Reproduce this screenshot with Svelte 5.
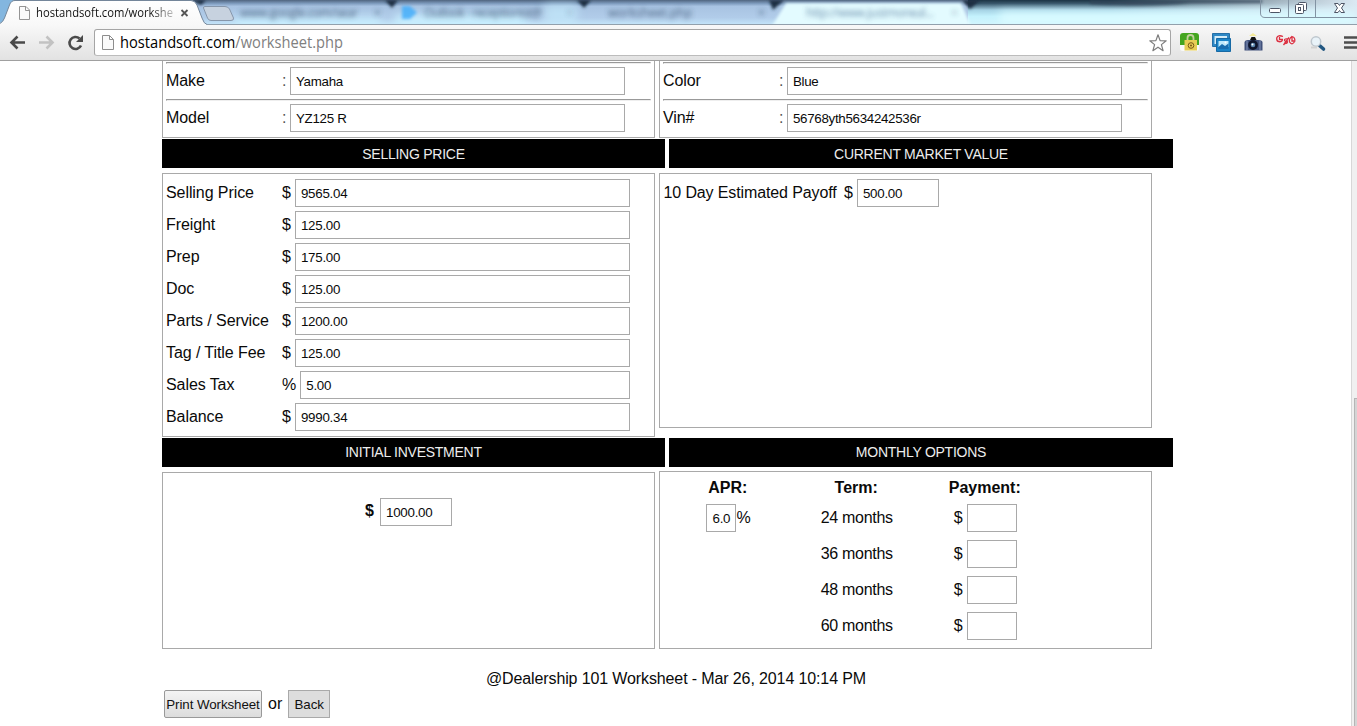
<script>
  const vehicle = [
    [['Make', 'Yamaha'], ['Model', 'YZ125 R']],
    [['Color', 'Blue'], ['Vin#', '56768yth5634242536r']]
  ];
  const prices = [
    ['Selling Price', '$', '9565.04'],
    ['Freight', '$', '125.00'],
    ['Prep', '$', '175.00'],
    ['Doc', '$', '125.00'],
    ['Parts / Service', '$', '1200.00'],
    ['Tag / Title Fee', '$', '125.00'],
    ['Sales Tax', '%', '5.00'],
    ['Balance', '$', '9990.34']
  ];
  const terms = [24, 36, 48, 60];
</script>

<div class="window">
  <header class="chrome">
    <svg class="tabs" width="1357" height="25" viewBox="0 0 1357 25">
      <defs>
        <linearGradient id="glass" x1="0" y1="0" x2="0" y2="1">
          <stop offset="0" stop-color="#50657f" />
          <stop offset=".14" stop-color="#7e9bbd" />
          <stop offset=".25" stop-color="#a8c3e2" />
          <stop offset=".7" stop-color="#b1cce9" />
          <stop offset="1" stop-color="#c5e6fa" />
        </linearGradient>
        <linearGradient id="bright" x1="0" y1="0" x2="0" y2="1">
          <stop offset="0" stop-color="#1c3444" />
          <stop offset=".14" stop-color="#38566a" />
          <stop offset=".4" stop-color="#a5d2e4" />
          <stop offset=".65" stop-color="#c4f2fd" />
          <stop offset="1" stop-color="#d3f5fd" />
        </linearGradient>
        <linearGradient id="corner" x1="0" y1="0" x2="1" y2="0">
          <stop offset="0" stop-color="#e6f4fb" stop-opacity="0" />
          <stop offset="1" stop-color="#dbe9f3" />
        </linearGradient>
        <linearGradient id="tabfill" x1="0" y1="0" x2="0" y2="1">
          <stop offset="0" stop-color="#fff" />
          <stop offset="1" stop-color="#f8f8f8" />
        </linearGradient>
        <linearGradient id="fade" gradientUnits="userSpaceOnUse" x1="150" y1="0" x2="175" y2="0">
          <stop offset="0" stop-color="#111" />
          <stop offset="1" stop-color="#111" stop-opacity=".2" />
        </linearGradient>
        <filter id="soft" x="-20%" y="-60%" width="140%" height="220%"><feGaussianBlur stdDeviation="2.4" /></filter>
        <filter id="mild" x="-20%" y="-60%" width="140%" height="220%"><feGaussianBlur stdDeviation="1.6" /></filter>
        <filter id="wide" x="-20%" y="-60%" width="140%" height="220%"><feGaussianBlur stdDeviation="5" /></filter>
      </defs>
      <rect width="1357" height="25" fill="url(#glass)" />
      <rect x="968" width="389" height="25" fill="url(#bright)" />
      <rect x="1110" width="247" height="25" fill="url(#corner)" />
      <path d="M1090 0H1262V3H1190Q1150 8 1090 4Z" fill="#2d4357" opacity=".8" filter="url(#mild)" />
      <g filter="url(#wide)" fill="#c8f0ff">
        <rect x="235" y="18" width="145" height="9" />
        <rect x="395" y="15" width="130" height="12" />
        <rect x="545" y="4" width="32" height="20" opacity=".6" />
        <rect x="1000" y="12" width="357" height="14" fill="#d9faff" />
      </g>
      <path d="M0 0H14L2 25H0Z" fill="#83b6df" />
      <g filter="url(#mild)">
        <path d="M772 26L786 3H961L971 26Z" fill="#e3fbff" />
        <path d="M385 0H398L392 8ZM577 0H591L584 8ZM769 0H784L773 10ZM962 0H980L970 9ZM192 0H206L201 5Z" fill="#1d2e43" />
      </g>
      <path d="M402 6H410L417 12.500L410 19H402Z" fill="#45aefa" filter="url(#mild)" opacity=".85" />
      <g class="ghost" filter="url(#soft)">
        <text x="240" y="17" textLength="118">www.google.com/sear</text>
        <text x="424" y="17" textLength="118">Outlook - receptionist@</text>
        <text x="608" y="17" textLength="84">worksheet.php</text>
        <text x="806" y="17" textLength="128" fill="#4f7397">http://www.justmoneal...</text>
        <text x="374" y="17">×</text><text x="566" y="17" opacity=".5">×</text><text x="758" y="17">×</text><text x="951" y="17" opacity=".6">×</text>
      </g>
      <rect y="24" width="1357" height="1" fill="#92a0ac" />
      <path d="M203.500 8Q203 6.500 205 6.500H225Q228 6.500 229.500 9L233.500 18Q234 20.500 231 20.500H211Q208.500 20.500 207.500 18Z" fill="#c7d2df" stroke="#8696aa" />
      <path d="M0 25V23Q3 22 4.500 18L9.500 5Q11 .5 15 .5H191Q195 .5 197 5L202 18Q204 24 207 24.500V25Z" fill="url(#tabfill)" />
      <path d="M0 23.500Q3 22 4.500 18L9.500 5Q11 .5 15 .5H191Q195 .5 197 5L202 18Q204 24 207 24.500" fill="none" stroke="#74869a" />
      <path d="M19.500 6.500H26L29.500 10V19.500H19.500ZM25.500 6.500V10.500H29.500" fill="#fafafa" stroke="#949494" />
      <text class="tabtitle" x="36" y="17" textLength="137" lengthAdjust="spacingAndGlyphs" fill="url(#fade)">hostandsoft.com/workshe</text>
      <path d="M181.500 10L187.500 16M187.500 10L181.500 16" stroke="#555" stroke-width="1.800" />
      <path d="M1260.500 0V13Q1260.500 17.500 1265 17.500H1357M1288.500 0V17M1315.500 0V17" fill="none" stroke="#8293a3" />
      <g fill="#fff" stroke="#4d5565">
        <rect x="1269.500" y="8.500" width="11" height="4" rx="1" />
        <rect x="1298.500" y="2.500" width="8" height="8" rx="1" />
        <rect x="1295.500" y="4.500" width="8" height="9" rx="1" />
        <rect x="1298.500" y="7.500" width="2" height="3" />
        <path d="M1334.500 3.500H1338L1339.500 5.500L1341 3.500H1344.500L1341.500 8L1344.500 12.500H1341L1339.500 10.500L1338 12.500H1334.500L1337.500 8Z" />
      </g>
    </svg>
    <div class="toolbar">
      <svg class="nav" width="94" height="35" viewBox="0 25 94 35">
        <path d="M25 42.500H12M17.500 36.500L11.500 42.500L17.500 48.500" fill="none" stroke="#4a4a4a" stroke-width="2.600" />
        <path d="M39 42.500H52M46.500 36.500L52.500 42.500L46.500 48.500" fill="none" stroke="#c2c2c2" stroke-width="2.600" />
        <path d="M81 45.500A6 6 0 1 1 79.500 38.500" fill="none" stroke="#4a4a4a" stroke-width="2.600" />
        <path d="M83 35V42H76Z" fill="#4a4a4a" />
      </svg>
      <div class="omnibox">
        <svg width="12" height="16" viewBox="0 0 12 16"><path d="M.5 .5H7.500L11.500 4.500V14.500H.5ZM7.500 .5V4.500H11.500" fill="#fafafa" stroke="#8d8d8d" /></svg>
        <svg class="url" width="240" height="25"><text x="0" y="18" textLength="223" lengthAdjust="spacingAndGlyphs">hostandsoft.com<tspan fill="#808080">/worksheet.php</tspan></text></svg>
        <svg class="star" width="20" height="20" viewBox="0 0 20 20"><path d="M10 1.800L12.100 7.600L18.200 7.800L13.400 11.600L15.100 17.700L10 14.200L4.900 17.700L6.600 11.600L1.800 7.800L7.900 7.600Z" fill="#fff" stroke="#7d7d7d" stroke-width="1.200" stroke-linejoin="round" /></svg>
      </div>
      <svg class="ext" width="187" height="35" viewBox="1170 25 187 35">
        <rect x="1180" y="33" width="19" height="18" rx="3" fill="#fafafa" />
        <path d="M1180 45V36Q1180 33 1183 33H1196Q1199 33 1199 36V45Z" fill="#43a51f" />
        <path d="M1187.500 42V38Q1187.500 35 1190.500 35T1193.500 38V42" fill="none" stroke="#c2cf9c" stroke-width="1.800" />
        <rect x="1184.500" y="40" width="12.500" height="10.500" fill="#e8cd55" />
        <circle cx="1191" cy="45.500" r="2.800" fill="none" stroke="#7b5716" /><circle cx="1191" cy="45.500" r="1" fill="#7b5716" />
        <path d="M1212.500 33.500H1229.500V46.500H1212.500Z" fill="#2e88c5" stroke="#256fa7" />
        <path d="M1214.500 36H1227V44H1214.500Z" fill="#d4ecf8" />
        <path d="M1216.500 38.500H1230.500V51.500H1216.500Z" fill="#1b83c7" stroke="#1769a4" />
        <path d="M1218.500 41H1228.500V47H1218.500Z" fill="#bee8fb" />
        <path d="M1218.500 47L1222 44L1225 46L1228.500 43.500V49H1218.500Z" fill="#176cae" /><circle cx="1225.500" cy="42.500" r="1" fill="#fff" />
        <path d="M1249 36H1257L1253 33Z" fill="#f4ea9a" /><path d="M1250 40L1251.500 37H1255L1256.500 40Z" fill="#111" />
        <path d="M1244.500 42Q1245 40 1248 40H1258Q1262 40 1262.500 42V50.500H1244.500Z" fill="#40517b" />
        <path d="M1247 41V50M1260 41V50" stroke="#7888ae" stroke-width="1.200" />
        <circle cx="1253" cy="45" r="4.900" fill="#0e152c" /><circle cx="1253" cy="45" r="2.300" fill="#5c87af" /><circle cx="1252.500" cy="44.500" r="1" fill="#fff" />
        <g fill="none" stroke="#dc2f40" stroke-width="1.300">
          <path d="M1283 36.500Q1278 34.500 1276.700 38Q1276.500 41.500 1279 41.700Q1282.500 42 1282.300 39.500M1279.500 37V39.500H1283" />
          <path d="M1288 39Q1284.500 38.500 1284.500 40T1287.300 41.500Q1288 43.800 1284 43.500M1289 37.500L1283.500 45" />
          <path d="M1292 36.500Q1288.800 38.500 1289.500 42Q1292 45.800 1294.700 41.500Q1295.500 37.500 1292 36.500V41H1294" />
        </g>
        <path d="M1319.500 45.500L1323.500 49" stroke="#225781" stroke-width="3.600" stroke-linecap="round" />
        <circle cx="1316" cy="41.500" r="4.700" fill="#e9f3f9" stroke="#bec7ce" stroke-width="1.500" />
        <path d="M1311 47.500H1317" stroke="#d2d2d2" stroke-width="2" />
        <path d="M1344 37.500H1357M1344 42.500H1357M1344 47.500H1357" stroke="#4d4d4d" stroke-width="2.600" />
      </svg>
    </div>
  </header>

  <div class="body">
    <main class="page">
      <div class="panels">
        {#each vehicle as side}
          <section class="panel info">
            {#each side as [name, value]}
              <hr />
              <div class="row"><span class="label">{name}</span><span class="colon">:</span><div class="field wide">{value}</div></div>
            {/each}
          </section>
        {/each}
      </div>

      <div class="bars"><h2>SELLING PRICE</h2><h2>CURRENT MARKET VALUE</h2></div>

      <div class="panels middle">
        <section class="panel price">
          {#each prices as [name, unit, value]}
            <div class="row"><span class="label">{name}</span><span class="unit">{unit}</span><div class="field grow">{value}</div></div>
          {/each}
        </section>
        <section class="panel market">
          <div class="row"><span class="payofflabel">10 Day Estimated Payoff</span><span class="unit">$</span><div class="field payoff">500.00</div></div>
        </section>
      </div>

      <div class="bars second"><h2>INITIAL INVESTMENT</h2><h2>MONTHLY OPTIONS</h2></div>

      <div class="panels bottom">
        <section class="panel initial">
          <b>$</b><div class="field deposit">1000.00</div>
        </section>
        <section class="panel monthly">
          <b>APR:</b><b>Term:</b><b>Payment:</b>
          {#each terms as term, i}
            <div class="cell">{#if i === 0}<div class="field apr">6.0</div><span class="pct">%</span>{/if}</div>
            <div class="cell term">{term} months</div>
            <div class="cell pay"><span>$</span><div class="field amount"></div></div>
          {/each}
        </section>
      </div>

      <p class="stamp">@Dealership 101 Worksheet - Mar 26, 2014 10:14 PM</p>
      <div class="actions"><button class="print">Print Worksheet</button><span>or</span><button class="back">Back</button></div>
    </main>
    <div class="scroll"><div class="thumb"></div></div>
  </div>
</div>

<style>
  :global(body) { margin: 0; background: #fff; overflow: hidden; }
  .window { width: 1357px; height: 726px; overflow: hidden; display: flex; flex-direction: column; background: #fff; color: #0a0a0a; font: 16px/28px "Liberation Sans", Arial, sans-serif; }
  .window * { box-sizing: border-box; }
  svg { display: block; flex: none; }
  .chrome { height: 61px; flex: none; border-bottom: 1px solid #a0a0a0; }
  .tabtitle { font: 12px "Open Sans", "Noto Sans", sans-serif; }
  .ghost { font: 12px "Open Sans", sans-serif; fill: #304965; opacity: .8; }
  .toolbar { height: 35px; display: flex; background: linear-gradient(#f8f8f8, #e2e2e2); }
  .omnibox { width: 1077px; height: 27px; margin-top: 4px; padding: 0 2px 0 7px; display: flex; align-items: center; background: #fff; border: 1px solid #a5a5a5; border-bottom-color: #bcbcbc; border-radius: 3px; }
  .url { margin-left: 6px; font: 16px "Open Sans", "Noto Sans", sans-serif; }
  .star { margin-left: auto; }
  .ext { margin-left: -1px; }

  .body { flex: 1; min-height: 0; display: flex; overflow: hidden; }
  .page { width: 1190px; padding-left: 162px; }
  .panels { display: flex; gap: 4px; align-items: flex-start; width: 990px; }
  .panel { width: 493px; border: 1px solid #a9a9a9; padding: 0 3px; }
  .info { height: 77px; border-top: 0; padding-top: 1px; }
  hr { margin: 0 0 3px; height: 2px; border: 1px solid #eee; border-top-color: #999; border-left-color: #999; }
  .row { display: flex; height: 28px; white-space: nowrap; }
  .info .row + hr { margin-top: 4px; }
  .label { width: 116px; letter-spacing: -.08px; }
  .colon { width: 8px; color: #555; }
  .unit { margin-right: 4px; }
  .field { height: 28px; border: 1px solid #a9a9a9; background: #fff; padding: 1px 5px 0; font-size: 13.33px; line-height: 26px; letter-spacing: -.25px; white-space: nowrap; }
  .info .field { letter-spacing: -.3px; }
  .wide { width: 335px; }
  .grow { flex: 1; margin-right: 21px; }
  .bars { display: grid; grid-template-columns: 503px 504px; gap: 4px; width: 1011px; margin-top: 1px; }
  h2 { height: 29px; margin: 0; background: #000; color: #ededed; font-size: 14px; font-weight: 400; line-height: 30px; letter-spacing: -.25px; text-align: center; }
  .middle { margin-top: 5px; }
  .price { height: 264px; padding-top: 5px; display: flex; flex-direction: column; gap: 4px; }
  .market { height: 255px; padding-top: 5px; }
  .payofflabel { width: 181px; letter-spacing: -.12px; padding-left: .5px; }
  .payoff { width: 82px; }
  .second h2 { line-height: 28px; }
  .bottom { margin-top: 4px; }
  .initial { height: 177px; margin-top: 1px; padding-top: 25px; display: flex; padding-left: 202px; }
  .initial b { width: 15px; line-height: 26px; }
  .deposit { width: 72px; }
  .monthly { height: 178px; display: grid; grid-template-columns: repeat(3, 128.500px); grid-template-rows: 32px repeat(4, 36px); text-align: center; }
  .monthly b { line-height: 32px; padding-left: 1px; }
  .cell { display: flex; justify-content: center; height: 28px; padding-left: 2px; }
  .term { letter-spacing: -.28px; }
  .apr { width: 30px; }
  .pct { letter-spacing: -.5px; }
  .pay span { margin-right: 4px; }
  .amount { width: 50px; }
  .stamp { width: 1028px; margin: 16px 0 0; text-align: center; line-height: 28px; letter-spacing: -.12px; }
  .actions { display: flex; margin: -3px 0 0 2px; }
  .actions span { margin: 0 6px; }
  button { height: 28px; padding: 0; font: 13.33px "Liberation Sans", Arial, sans-serif; color: #111; border: 1px solid #999; white-space: nowrap; }
  .print { width: 98px; border-radius: 2px; background: linear-gradient(#f4f4f4, #dcdcdc); letter-spacing: -.08px; }
  .back { width: 42px; background: #ddd; border-color: #a9a9a9; }
  .scroll { width: 6px; margin-left: auto; border-left: 1px solid #d7d7d7; background: #f0f0f0; padding: 337px 0 0 2px; }
  .thumb { height: 340px; background: #d4d4d4; border: 1px solid #b5b5b5; border-right: 0; }
</style>
